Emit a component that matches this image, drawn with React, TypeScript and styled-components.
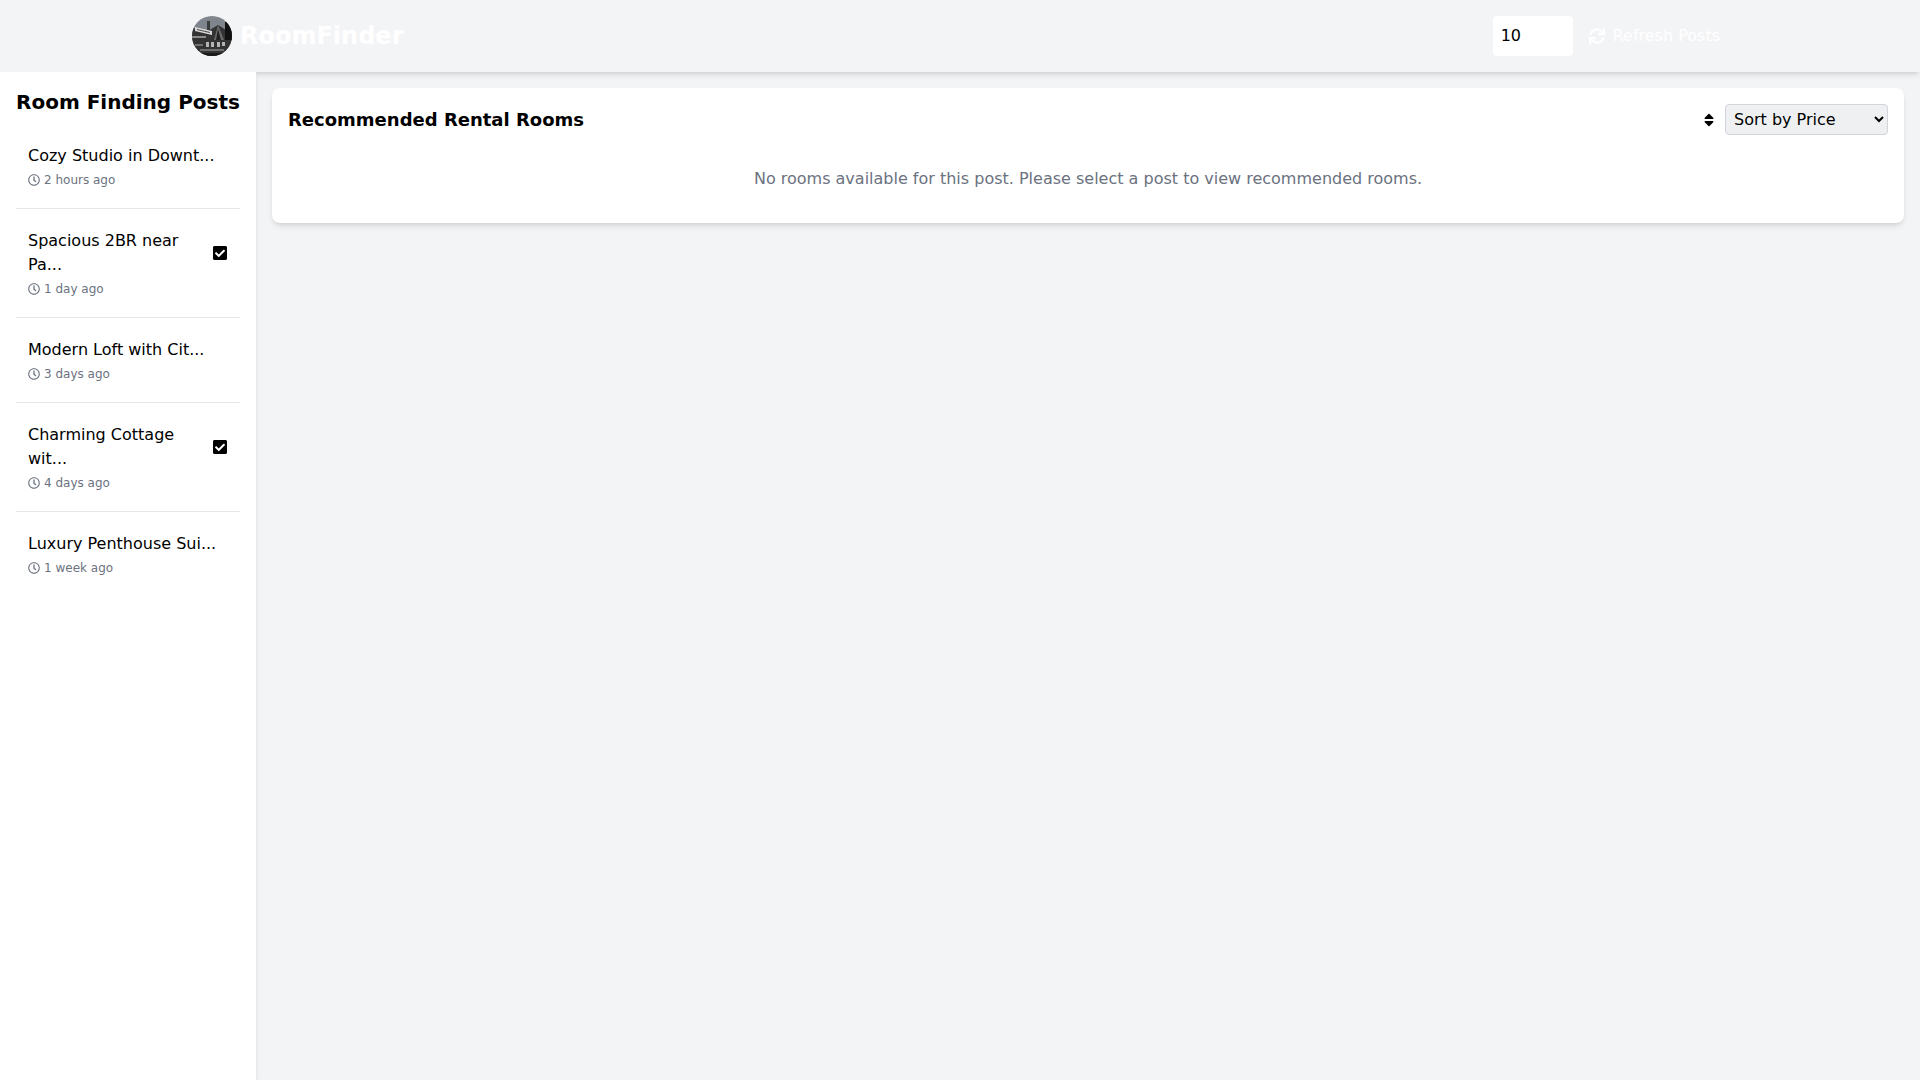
import React from 'react'
import styled, { createGlobalStyle } from 'styled-components'
import { FaCheckSquare, FaRegClock, FaSort, FaSync } from 'react-icons/fa'

const GlobalStyle = createGlobalStyle`
  * {
    box-sizing: border-box;
  }
  html, body {
    margin: 0;
    height: 100%;
  }
  body {
    background-color: #f3f4f6;
    color: #000;
    font-family: "DejaVu Sans", sans-serif;
    font-size: 16px;
    line-height: 24px;
  }
`

const Page = styled.div`
  height: 100vh;
  display: flex;
  flex-direction: column;
  overflow: hidden;
`

const Header = styled.header`
  height: 72px;
  flex-shrink: 0;
  background-color: #f3f4f6;
  box-shadow: 0 4px 6px -1px rgba(0, 0, 0, 0.1), 0 2px 4px -2px rgba(0, 0, 0, 0.1);
  position: relative;
  z-index: 1;
`

const HeaderInner = styled.div`
  width: 1536px;
  height: 100%;
  margin: 0 auto;
  display: flex;
  align-items: center;
  justify-content: space-between;
`

const Brand = styled.div`
  display: flex;
  align-items: center;
  gap: 8px;
`

const BrandName = styled.span`
  color: #fff;
  font-size: 24px;
  line-height: 32px;
  font-weight: 700;
`

const Controls = styled.div`
  display: flex;
  align-items: center;
`

const CountInput = styled.input`
  width: 80px;
  height: 40px;
  padding: 7px 8px 9px;
  border: none;
  border-radius: 4px;
  background-color: #fff;
  color: #000;
  font-family: inherit;
  font-size: 16px;
  line-height: 24px;
  outline: none;
`

const RefreshButton = styled.button`
  display: flex;
  align-items: center;
  gap: 8px;
  padding: 8px 8px 8px 16px;
  border: none;
  background: transparent;
  color: #fff;
  font-family: inherit;
  font-size: 16px;
  line-height: 24px;
`

const Body = styled.div`
  flex: 1;
  display: flex;
  min-height: 0;
`

const Sidebar = styled.aside`
  width: 256px;
  flex-shrink: 0;
  padding: 16px;
  background-color: #fff;
  box-shadow: 0 4px 6px -1px rgba(0, 0, 0, 0.1), 0 2px 4px -2px rgba(0, 0, 0, 0.1);
  position: relative;
  z-index: 2;
`

const SidebarTitle = styled.h2`
  margin: 0 0 16px;
  font-size: 20px;
  line-height: 28px;
  font-weight: 700;
  white-space: nowrap;
`

const PostList = styled.ul`
  margin: 0;
  padding: 0;
  list-style: none;
`

const PostRow = styled.li`
  padding-bottom: 8px;
  margin-bottom: 8px;
  border-bottom: 1px solid #e5e7eb;

  &:last-child {
    border-bottom: none;
  }
`

const PostCard = styled.div`
  padding: 12px;
`

const PostHead = styled.div`
  display: flex;
  align-items: center;
  justify-content: space-between;
  gap: 8px;
`

const PostTitle = styled.div`
  font-size: 16px;
  line-height: 24px;
`

const PostTime = styled.div`
  display: flex;
  align-items: center;
  gap: 4px;
  margin-top: 4px;
  color: #6b7280;
  font-size: 12px;
  line-height: 16px;
`

const CheckIcon = styled(FaCheckSquare)`
  flex-shrink: 0;
  font-size: 16px;
  color: #000;
`

const Main = styled.main`
  flex: 1;
  min-width: 0;
  padding: 16px;
`

const Card = styled.section`
  padding: 16px;
  background-color: #fff;
  border-radius: 8px;
  box-shadow: 0 4px 6px -1px rgba(0, 0, 0, 0.1), 0 2px 4px -2px rgba(0, 0, 0, 0.1);
`

const CardHeader = styled.div`
  display: flex;
  align-items: center;
  justify-content: space-between;
  margin-bottom: 16px;
`

const CardTitle = styled.h2`
  margin: 0;
  font-size: 18px;
  line-height: 28px;
  font-weight: 700;
`

const SortGroup = styled.div`
  display: flex;
  align-items: center;
  gap: 8px;
`

const SortSelect = styled.select`
  width: 163px;
  height: 31px;
  padding: 4px;
  border: 1px solid #d1d5db;
  border-radius: 4px;
  background-color: #eff0f2;
  color: #000;
  font-family: inherit;
  font-size: 16px;
`

const EmptyMessage = styled.p`
  margin: 0;
  padding: 16px 0;
  text-align: center;
  color: #6b7280;
  font-size: 16px;
  line-height: 24px;
`

const posts = [
  { title: 'Cozy Studio in Downt...', time: '2 hours ago', checked: false },
  { title: 'Spacious 2BR near Pa...', time: '1 day ago', checked: true },
  { title: 'Modern Loft with Cit...', time: '3 days ago', checked: false },
  { title: 'Charming Cottage wit...', time: '4 days ago', checked: true },
  { title: 'Luxury Penthouse Sui...', time: '1 week ago', checked: false },
]

// small drawing of the house photo used as logo
const Logo = () => (
  <svg width="40" height="40" viewBox="0 0 40 40" aria-label="RoomFinder logo">
    <defs>
      <clipPath id="logoCircle">
        <circle cx="20" cy="20" r="20" />
      </clipPath>
    </defs>
    <g clipPath="url(#logoCircle)">
      <rect width="40" height="40" fill="#7f858c" />
      <path d="M0 12 L16 15 L26 9 L34 14 L40 12 L40 40 L0 40 Z" fill="#333" />
      <path d="M15 5 h3 v11 h-3 Z" fill="#3a3a3a" />
      <path d="M3 11 L20 15 L20 19 L3 15 Z" fill="#d9d9d9" />
      <path d="M5 13 L18 16 L18 17 L5 14 Z" fill="#4a4a4a" />
      <path d="M26 9 L32 24 L22 24 Z" fill="#6a6a6a" />
      <path d="M26 13 L29 24 L24 24 Z" fill="#222" />
      <path d="M33 6 h7 v18 h-7 Z" fill="#111" />
      <path d="M0 20 h14 v2 h-14 Z" fill="#8c8c8c" />
      <path d="M14 26 h3 v5 h-3 Z M19 26 h3 v5 h-3 Z M25 26 h3 v5 h-3 Z M30 26 h3 v4 h-3 Z" fill="#b4b4b4" />
      <path d="M3 28 h8 v2 h-8 Z" fill="#707070" />
      <path d="M8 33 h24 v2 h-24 Z" fill="#6e6e6e" />
      <path d="M0 37 h40 v3 h-40 Z" fill="#1a1a1a" />
    </g>
  </svg>
)

export default function App() {
  return (
    <Page>
      <GlobalStyle />
      <Header>
        <HeaderInner>
          <Brand>
            <Logo />
            <BrandName>RoomFinder</BrandName>
          </Brand>
          <Controls>
            <CountInput type="number" defaultValue={10} />
            <RefreshButton>
              <FaSync />
              Refresh Posts
            </RefreshButton>
          </Controls>
        </HeaderInner>
      </Header>
      <Body>
        <Sidebar>
          <SidebarTitle>Room Finding Posts</SidebarTitle>
          <PostList>
            {posts.map((post) => (
              <PostRow key={post.title}>
                <PostCard>
                  <PostHead>
                    <PostTitle>{post.title}</PostTitle>
                    {post.checked && <CheckIcon />}
                  </PostHead>
                  <PostTime>
                    <FaRegClock />
                    {post.time}
                  </PostTime>
                </PostCard>
              </PostRow>
            ))}
          </PostList>
        </Sidebar>
        <Main>
          <Card>
            <CardHeader>
              <CardTitle>Recommended Rental Rooms</CardTitle>
              <SortGroup>
                <FaSort />
                <SortSelect defaultValue="price">
                  <option value="price">Sort by Price</option>
                  <option value="date">Sort by Date</option>
                </SortSelect>
              </SortGroup>
            </CardHeader>
            <EmptyMessage>No rooms available for this post. Please select a post to view recommended rooms.</EmptyMessage>
          </Card>
        </Main>
      </Body>
    </Page>
  )
}
